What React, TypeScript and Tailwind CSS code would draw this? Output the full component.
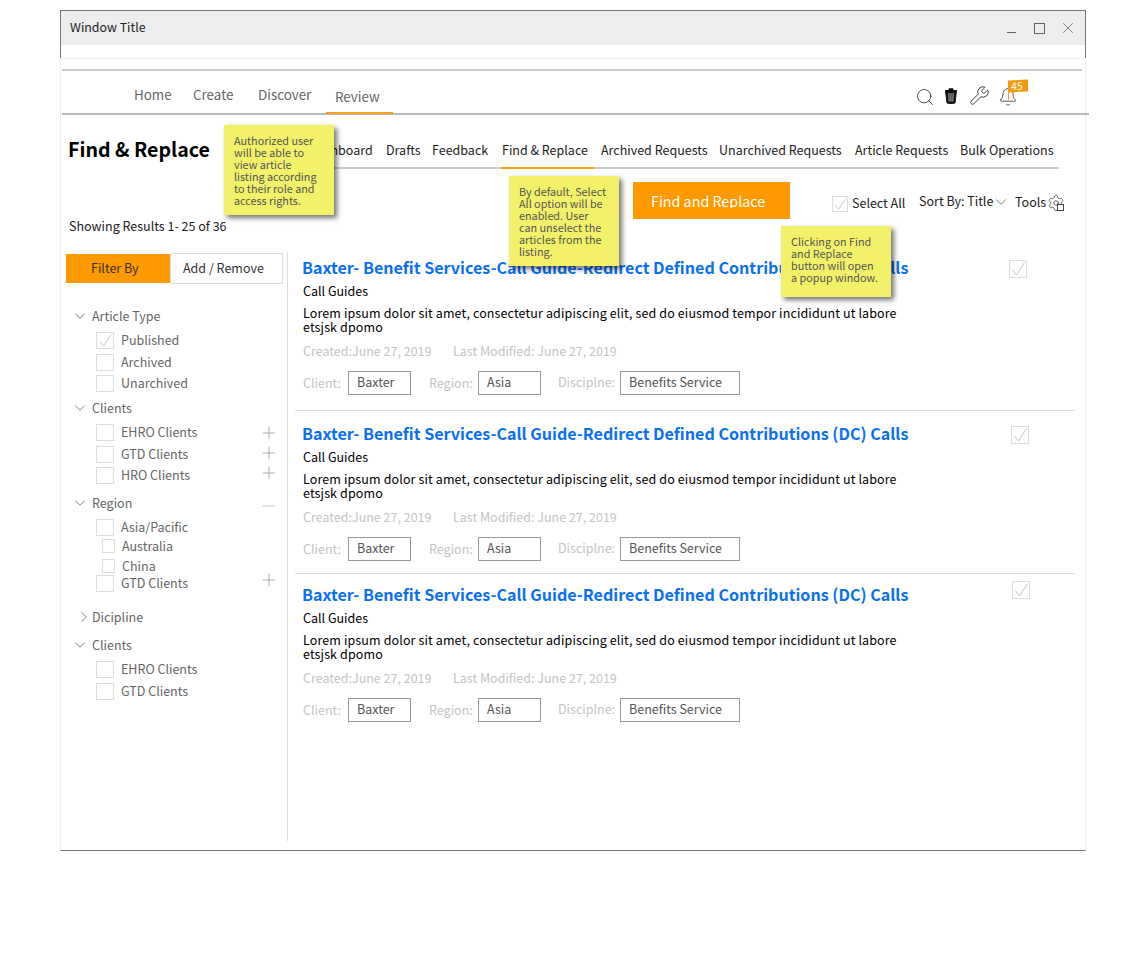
import { Bell, ChevronDown, ChevronRight, Minus, Plus, Search, Settings, Wrench, X } from "lucide-react";

const tabs = [
  { label: "Dashboard", w: "w-[77px]" },
  { label: "Drafts", w: "w-[46px]" },
  { label: "Feedback", w: "w-[70px]" },
  { label: "Find & Replace", w: "w-[99px]", active: true },
  { label: "Archived Requests", w: "w-[118px]" },
  { label: "Unarchived Requests", w: "w-[136px]" },
  { label: "Article Requests", w: "w-[105px]" },
  { label: "Bulk Operations", w: "w-[99px]" },
];

type Row = {
  label: string;
  mt: string;
  kind: "open" | "closed" | "check" | "sub";
  checked?: boolean;
  icon?: "plus" | "minus";
  iconMt?: string;
};

const filterRows: Row[] = [
  { label: "Article Type", mt: "mt-[24px]", kind: "open" },
  { label: "Published", mt: "mt-[8px]", kind: "check", checked: true },
  { label: "Archived", mt: "mt-[6px]", kind: "check" },
  { label: "Unarchived", mt: "mt-[5px]", kind: "check" },
  { label: "Clients", mt: "mt-[9px]", kind: "open" },
  { label: "EHRO Clients", mt: "mt-[8px]", kind: "check", icon: "plus", iconMt: "mt-[2px]" },
  { label: "GTD Clients", mt: "mt-[6px]", kind: "check", icon: "plus", iconMt: "-mt-[2px]" },
  { label: "HRO Clients", mt: "mt-[5px]", kind: "check", icon: "plus", iconMt: "-mt-[4px]" },
  { label: "Region", mt: "mt-[12px]", kind: "open", icon: "minus", iconMt: "mt-[6px]" },
  { label: "Asia/Pacific", mt: "mt-[8px]", kind: "check" },
  { label: "Australia", mt: "mt-[3px]", kind: "sub" },
  { label: "China", mt: "mt-[4px]", kind: "sub" },
  { label: "GTD Clients", mt: "mt-[1px]", kind: "check", icon: "plus", iconMt: "-mt-[6px]" },
  { label: "Dicipline", mt: "mt-[18px]", kind: "closed" },
  { label: "Clients", mt: "mt-[12px]", kind: "open" },
  { label: "EHRO Clients", mt: "mt-[8px]", kind: "check" },
  { label: "GTD Clients", mt: "mt-[6px]", kind: "check" },
];

const articles = [
  { pad: "pt-[3px] pb-[15px] border-b border-[#ddd]", check: "ml-[34px] mt-[5px]" },
  { pad: "pt-[10px] pb-[12px] border-b border-[#ddd]", check: "ml-[36px] mt-[5px]" },
  { pad: "pt-[8px]", check: "ml-[37px] -mt-[1px]" },
];

function Tick({ className }: { className: string }) {
  return (
    <span className={`flex shrink-0 items-center justify-center border border-[#ddd] bg-white ${className}`}>
      <svg viewBox="0 0 16 16" className="h-full w-full" fill="none" stroke="#bbb" strokeWidth="0.9">
        <path d="M2.5 9 L6.5 14 L14.5 1.5" />
      </svg>
    </span>
  );
}

function FilterRow({ row }: { row: Row }) {
  const isHead = row.kind === "open" || row.kind === "closed";
  return (
    <div className={`flex h-[16px] items-center text-[12.5px] text-[#666] ${row.mt}`}>
      {isHead && (
        <>
          {row.kind === "open" ? (
            <ChevronDown className="ml-[10px]" size={18} strokeWidth={0.9} color="#444" />
          ) : (
            <ChevronRight className="ml-[14px]" size={18} strokeWidth={0.9} color="#444" />
          )}
          <span className={row.kind === "open" ? "ml-[3px]" : "ml-[-1px]"}>{row.label}</span>
        </>
      )}
      {row.kind === "check" &&
        (row.checked ? (
          <Tick className="ml-[35px] h-[17px] w-[18px]" />
        ) : (
          <span className="ml-[35px] h-[17px] w-[18px] shrink-0 border border-[#ddd]" />
        ))}
      {row.kind === "check" && <span className="ml-[7px]">{row.label}</span>}
      {row.kind === "sub" && (
        <>
          <span className="ml-[41px] h-[14px] w-[13px] shrink-0 border border-[#ddd]" />
          <span className="ml-[7px]">{row.label}</span>
        </>
      )}
      {row.icon === "plus" && (
        <Plus className={`ml-auto mr-[8px] ${row.iconMt}`} size={20} strokeWidth={0.8} color="#888" />
      )}
      {row.icon === "minus" && (
        <Minus className={`ml-auto mr-[8px] ${row.iconMt}`} size={20} strokeWidth={0.8} color="#aaa" />
      )}
    </div>
  );
}

function Article({ pad, check }: { pad: string; check: string }) {
  return (
    <article className={`flex ${pad}`}>
      <div className="w-[680px] shrink-0 pl-[8px]">
        <h2 className="-ml-px h-[25px] whitespace-nowrap text-[16.1px] leading-[24px] font-bold text-[#0a70f0]">
          Baxter- Benefit Services-Call Guide-Redirect Defined Contributions (DC) Calls
        </h2>
        <p className="mt-[4px] text-[12.5px] leading-[14px] text-black">Call Guides</p>
        <p className="mt-[8px] w-[600px] text-[12.5px] leading-[14px] tracking-[0.12px] text-black">
          Lorem ipsum dolor sit amet, consectetur adipiscing elit, sed do eiusmod tempor incididunt ut labore etsjsk dpomo
        </p>
        <div className="mt-[10px] flex text-[12.5px] leading-[14px] text-[#c4c4c4]">
          <span className="w-[150px]">Created:June 27, 2019</span>
          <span>Last Modified: June 27, 2019</span>
        </div>
        <div className="mt-[13px] flex h-[24px] items-center text-[12.5px] text-[#c4c4c4]">
          <span className="w-[45px] pt-px">Client:</span>
          <span className="flex h-[24px] w-[63px] items-center border border-[#999] pb-[2px] pl-[8px] text-[#555]">Baxter</span>
          <span className="ml-[18px] w-[49px] pt-px">Region:</span>
          <span className="flex h-[24px] w-[63px] items-center border border-[#999] pb-[2px] pl-[8px] text-[#555]">Asia</span>
          <span className="ml-[17px] w-[62px] -mt-[2px]">Disciplne:</span>
          <span className="flex h-[24px] w-[120px] items-center border border-[#999] pb-[2px] pl-[8px] text-[#555]">Benefits Service</span>
        </div>
      </div>
      <Tick className={`h-[18px] w-[18px] ${check}`} />
    </article>
  );
}

function Note({ className, children }: { className: string; children: string }) {
  return (
    <div className={`absolute z-10 w-[110px] bg-[#f3f169] pl-[10px] pr-[12px] pt-[9px] text-[10.8px] leading-[12px] text-[#555] shadow-[3px_3px_5px_rgba(0,0,0,0.55)] ${className}`}>
      {children}
    </div>
  );
}

export default function App() {
  return (
    <div className="min-h-[960px] bg-white pt-[10px] pl-[60px] font-['Noto_Sans_CJK_JP','Liberation_Sans',sans-serif]">
      <div className="relative h-[841px] w-[1026px] border-x border-b border-[#eee] border-b-[#777]">
        {/* window header */}
        <div className="-mx-px h-[48px] border-x border-t border-[#777]">
          <div className="flex h-[34px] items-center bg-[#ededed] pl-[9px] text-[12.4px] text-[#222]">
            <span className="-mt-[2px]">Window Title</span>
            <span className="ml-auto mt-[9px] h-px w-[9px] bg-[#666]" />
            <span className="ml-[18px] h-[11px] w-[11px] border border-[#666]" />
            <X className="ml-[14px] mr-[8px]" size={18} strokeWidth={0.9} color="#555" />
          </div>
        </div>
        <div className="-mx-px border-b border-[#eee]" />

        {/* top nav */}
        <div className="ml-px mt-[10px] h-[2px] w-[1020px] bg-[#ccc]" />
        <nav className="ml-px flex h-[44px] w-[1027px] items-center border-b-2 border-[#bbb] pl-[72px] text-[13.4px] text-[#666]">
          <span className="mt-[4px] w-[59px]">Home</span>
          <span className="mt-[4px] w-[65px]">Create</span>
          <span className="mt-[4px] w-[77px]">Discover</span>
          <span className="relative mt-[8px] w-[58px]">
            Review
            <span className="absolute -left-[9px] top-[26px] h-[2px] w-[67px] bg-[#f9a11b]" />
          </span>
          <div className="ml-[522px] mt-[10px] flex items-center">
            <Search size={20} strokeWidth={0.95} color="#222" />
            <svg viewBox="0 0 12 16" className="ml-[10px] -mt-[2px] h-[16px] w-[12px]">
              <path d="M0.5 2.5 H11.5 L10 15 Q6 16 2 15 Z M4 2 V0.8 H8 V2" fill="#111" stroke="#111" />
              <path d="M3.8 5 L4.2 13.5 M6 5 V13.5 M8.2 5 L7.8 13.5" stroke="#fff" strokeWidth="0.7" />
            </svg>
            <Wrench className="ml-[12px] -mt-[3px]" size={21} strokeWidth={1} color="#222" />
            <span className="relative ml-[8px] -mt-[1px]">
              <Bell size={20} strokeWidth={0.9} color="#222" />
              <span className="absolute -top-[7px] left-[10px] flex h-[12px] w-[20px] items-center -skew-y-3 bg-[#f09c12] pl-[3px] text-[10.5px] leading-none text-white">
                45
              </span>
              <span className="absolute left-[10px] top-[5px] h-[8px] w-px bg-[#f0a030]" />
            </span>
          </div>
        </nav>

        {/* title and tabs */}
        <div className="ml-px flex h-[54px] items-start">
          <h1 className="w-[247px] pl-[6px] pt-[19px] text-[19.6px] leading-[30px] font-bold whitespace-nowrap text-black">
            Find &amp; Replace
          </h1>
          <div className="flex h-[54px] border-b-2 border-[#ccc]">
            {tabs.map((tab) => (
              <div key={tab.label} className={`relative pt-[27px] text-[12.5px] leading-[16px] whitespace-nowrap text-[#222] ${tab.w}`}>
                {tab.label}
                {tab.active && <span className="absolute -bottom-[2px] -left-px h-[2px] w-[93px] bg-[#f9a11b]" />}
              </div>
            ))}
          </div>
        </div>

        {/* toolbar */}
        <div className="ml-px flex h-[83px] items-start text-[12.5px] text-[#222]">
          <div className="w-[571px] pl-[7px] pt-[50px] leading-[14px]">Showing Results 1- 25 of 36</div>
          <button className="mt-[13px] flex h-[37px] w-[157px] justify-start bg-[#ff9900] pl-[18px] pt-[9px] text-[14.3px] text-white">
            <span className="block h-[17px] overflow-hidden leading-[20px]">Find and Replace</span>
          </button>
          <Tick className="ml-[42px] mt-[27px] h-[16px] w-[16px]" />
          <span className="ml-[4px] mt-[25px] w-[67px]">Select All</span>
          <span className="mt-[22px] flex w-[96px] items-center">
            Sort By: Title
            <ChevronDown className="-ml-[1px] mt-[2px]" size={18} strokeWidth={0.9} color="#444" />
          </span>
          <span className="mt-[24px] w-[33px]">Tools</span>
          <span className="relative -ml-[1px] mt-[25px]">
            <Settings size={18} strokeWidth={0.95} color="#333" />
            <span className="absolute left-[10px] top-[10px] h-[7px] w-[7px] border border-[#444] bg-white" />
          </span>
        </div>

        {/* body */}
        <div className="flex">
          <aside className="h-[589px] w-[227px] shrink-0 border-r border-[#ddd]">
            <div className="ml-[5px] mt-px flex h-[31px] w-[217px] items-center text-[12.5px]">
              <span className="flex h-[29px] w-[104px] items-center bg-[#ff9900] pl-[25px] text-[#333]">Filter By</span>
              <span className="flex h-[31px] w-[113px] items-center border border-[#ddd] pl-[12px] text-[#333]">Add / Remove</span>
            </div>
            {filterRows.map((row, i) => (
              <FilterRow key={i} row={row} />
            ))}
          </aside>
          <main className="ml-[7px] w-[780px]">
            {articles.map((a, i) => (
              <Article key={i} pad={a.pad} check={a.check} />
            ))}
          </main>
        </div>

        <Note className="left-[163px] top-[115px] h-[90px]">
          Authorized user will be able to view article listing according to their role and access rights.
        </Note>
        <Note className="left-[448px] top-[166px] h-[90px]">
          By default, Select All option will be enabled. User can unselect the articles from the listing.
        </Note>
        <Note className="left-[720px] top-[216px] h-[71px]">
          Clicking on Find and Replace button will open a popup window.
        </Note>
      </div>
    </div>
  );
}
